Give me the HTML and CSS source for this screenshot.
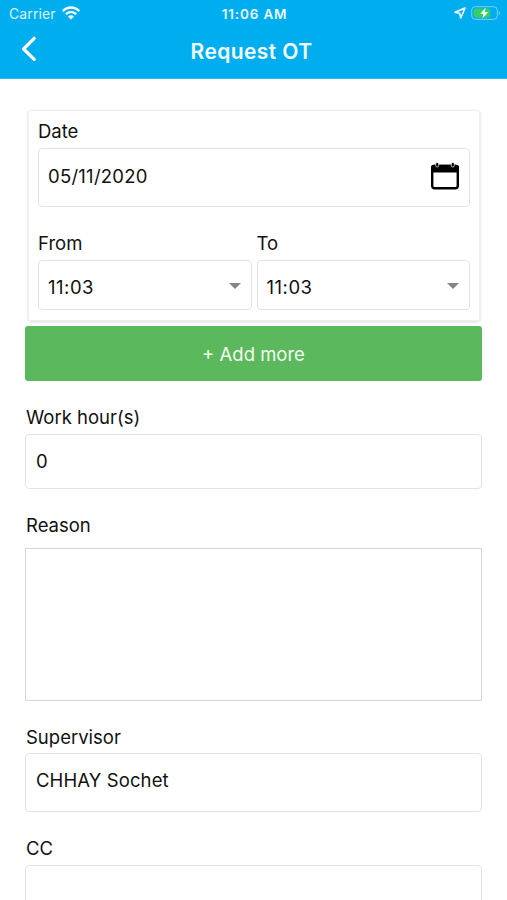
FILE: index.html
```html
<!DOCTYPE html>
<html lang="en">
<head>
<meta charset="utf-8">
<title>Request OT</title>
<link rel="stylesheet" href="styles.css">
</head>
<body>
<header class="header">
  <div class="status">
    <div class="status-left">
      <span class="carrier">Carrier</span>
      <svg class="wifi" width="18" height="14" viewBox="0 0 18 14" fill="none" stroke="#fff" stroke-width="2.3"><path d="M.8 5.1C5.5.3 12.500.3 17.200 5.100M3.900 8.200C6.900 5.300 11.100 5.300 14.100 8.200"/><path d="M9 13.600 6 10.600Q9 8 12 10.600Z" fill="#fff" stroke="none"/></svg>
    </div>
    <span class="clock">11:06 AM</span>
    <div class="status-right">
      <svg width="12" height="12" viewBox="0 0 12 12" fill="none" stroke="#fff" stroke-width="1.500" stroke-linejoin="round"><path d="M11 1 1 5.300 5.600 6.300 6.800 11Z"/></svg>
      <svg width="31" height="14" viewBox="0 0 31 14"><rect x=".7" y=".7" width="25.600" height="12.600" rx="3.600" fill="none" stroke="#79cff4" stroke-width="1"/><rect x="2.600" y="2.500" width="16.500" height="9" rx="2" fill="#35cf65"/><path d="M27.800 4.800Q30.300 7 27.800 9.200Z" fill="#79cff4"/><path d="M14.800 1.600 9.300 7.700H12.500L11.300 12.500 17.200 6.200H13.700Z" fill="#fff"/></svg>
    </div>
  </div>
  <div class="navbar">
    <svg class="back" width="16" height="26" viewBox="0 0 16 26" fill="none" stroke="#fff" stroke-width="3.200" stroke-linecap="round" stroke-linejoin="round"><path d="M13.200 2.300 2.600 13 13.200 23.300"/></svg>
    <h1 class="title">Request OT</h1>
  </div>
</header>
<main class="form">
  <section class="card">
    <div class="label">Date</div>
    <div class="field date"><span class="value date-value">05/11/2020</span>
      <svg width="30" height="28" viewBox="0 0 30 28"><rect x="2.200" y="4" width="25.600" height="22.200" rx="2.400" fill="none" stroke="#000" stroke-width="2.400"/><path d="M1 10.500V5.500Q1 2.800 3.800 2.800H26.200Q29 2.800 29 5.500V10.500Z"/><g stroke="#fff" stroke-width=".7"><rect x="5.700" y=".4" width="3" height="4.600" rx="1.500"/><rect x="21.300" y=".4" width="3" height="4.600" rx="1.500"/></g></svg>
    </div>
    <div class="times">
      <div><div class="label">From</div><div class="field select"><span class="value">11:03</span><i class="caret"></i></div></div>
      <div><div class="label">To</div><div class="field select"><span class="value">11:03</span><i class="caret"></i></div></div>
    </div>
  </section>
  <button class="add">+ Add more</button>
  <div class="group"><div class="label hours">Work hour(s)</div><div class="field number"><span class="value">0</span></div></div>
  <div class="group"><div class="label">Reason</div><div class="reason"></div></div>
  <div class="group"><div class="label">Supervisor</div><div class="field person"><span class="value">CHHAY Sochet</span></div></div>
  <div class="group"><div class="label">CC</div><div class="field cc"></div></div>
</main>
</body>
</html>
```
FILE: styles.css
```css
* { box-sizing: border-box; }
html { height: 900px; overflow: hidden; }
body { margin: 0; height: 900px; overflow: hidden; background: #fff; color: #111; font-family: Inter, "Liberation Sans", sans-serif; font-size: 18.5px; }
.header { height: 79px; background: #00aeef; border-bottom: 1px solid #2cbbf1; color: #fff; }
.status { display: grid; grid-template-columns: 1fr auto 1fr; align-items: center; height: 27px; padding: 0 6px 0 9px; }
.status-left { display: flex; align-items: center; gap: 6px; }
.wifi { margin-top: -2px; }
.carrier { font-size: 14px; color: #d9f3fd; letter-spacing: .1px; }
.clock { font-size: 13.5px; font-weight: 600; color: #e9f8fe; letter-spacing: .85px; margin-right: 1px; }
.status-right { display: flex; justify-content: flex-end; align-items: center; gap: 5px; margin-top: -1px; margin-right: -1px; }
.navbar { display: grid; grid-template-columns: 40px 1fr 40px; align-items: center; height: 48px; padding: 0 20px; }
.title { margin: 1px 0 0 -4px; font-size: 21px; line-height: 26px; font-weight: 600; letter-spacing: .4px; text-align: center; color: #f4fcff; }
.back { margin-left: 1px; margin-top: -4px; }
.form { padding: 31px 25px 0; }
.card { height: 211px; margin: 0 2px 0 3px; padding: 9px 9px 0; border-radius: 3px; border: 1px solid #efefef; box-shadow: 0 1px 3px rgba(0,0,0,.16); }
.label { height: 23px; line-height: 23px; }
.field { display: flex; align-items: center; justify-content: space-between; border: 1px solid #e3e3e3; border-radius: 4px; padding: 0 10px; }
.date { height: 59px; margin-top: 5px; padding-bottom: 4px; padding-right: 9px; }
.date-value { letter-spacing: .25px; margin-left: -1px; }
.times { display: grid; grid-template-columns: 1fr 1fr; gap: 5px; margin-top: 25px; }
.select { height: 50px; margin-top: 5px; padding-top: 4px; }
.select .value { letter-spacing: .5px; margin-left: -1px; }
.caret { width: 0; height: 0; border: 6px solid transparent; border-top-color: #858585; border-bottom: 0; margin: -2px 0 0 0; }
.add { display: block; width: 100%; height: 55px; margin-top: 5px; padding: 0; border: 0; border-radius: 3px; background: #5cb85c; color: #f1fff1; font: inherit; }
.group { margin-top: 25px; }
.group .label { padding-left: 1px; }
.number { height: 55px; margin-top: 5px; padding-bottom: 1px; }
.reason { height: 153px; margin-top: 11px; border: 1px solid #d8d8d8; }
.person { height: 59px; margin-top: 4px; padding-bottom: 5px; }
.person .value { letter-spacing: .1px; }
.cc { height: 59px; margin-top: 5px; }
```
